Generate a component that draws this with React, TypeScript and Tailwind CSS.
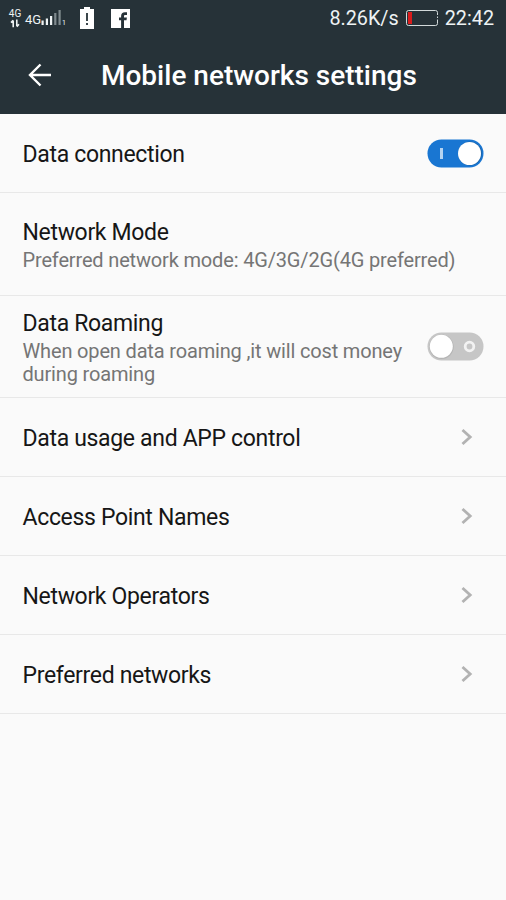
import React from 'react';

type Row = {
  title: string;
  summary?: string;
  control?: 'on' | 'off' | 'link';
  height: string;
};

const rows: Row[] = [
  { title: 'Data connection', control: 'on', height: 'h-[79px]' },
  { title: 'Network Mode', summary: 'Preferred network mode: 4G/3G/2G(4G preferred)', height: 'h-[103px]' },
  {
    title: 'Data Roaming',
    summary: 'When open data roaming ,it will cost money during roaming',
    control: 'off',
    height: 'h-[102px]',
  },
  { title: 'Data usage and APP control', control: 'link', height: 'h-[79px]' },
  { title: 'Access Point Names', control: 'link', height: 'h-[79px]' },
  { title: 'Network Operators', control: 'link', height: 'h-[79px]' },
  { title: 'Preferred networks', control: 'link', height: 'h-[79px]' },
];

const StatusBar: React.FC = () => (
  <div className="flex h-9 items-center pl-2 pr-3 text-[#eef3f4]">
    <div className="flex w-[14px] flex-col items-center">
      <span className="text-[10px] leading-[10px]">4G</span>
      <svg width="10" height="9" viewBox="0 0 10 9" fill="none" stroke="currentColor" strokeWidth="1.6">
        <path d="M3.2 8.2V1.5M1 3.6L3.2 1.2M6.8 0.5v6.7M9 5.2L6.8 7.6" />
      </svg>
    </div>
    <span className="ml-[3px] mt-[3px] w-4 text-[13px] leading-4">4G</span>
    <svg width="25" height="18" viewBox="0 0 25 18">
      <g fill="#eef3f4">
        <rect x="0.5" y="11.5" width="2.2" height="4.5" />
        <rect x="4.8" y="9.5" width="2.2" height="6.5" />
        <rect x="9" y="7" width="2.2" height="9" />
      </g>
      <g fill="#7f8a8e">
        <rect x="13.2" y="4" width="2.2" height="12" />
        <rect x="17.5" y="1" width="2.2" height="15" />
      </g>
      <text x="21" y="16" fontSize="7" fill="#eef3f4">1</text>
    </svg>
    <svg className="ml-[14px]" width="14" height="22" viewBox="0 0 14 22">
      <path d="M4 0h6v2h4v20H0V2h4z" fill="#fff" />
      <path d="M6.1 6h1.8v8H6.1zM6.1 16h1.8v2H6.1z" fill="#263238" />
    </svg>
    <svg className="ml-[17px]" width="19" height="19" viewBox="0 0 19 19">
      <rect width="19" height="19" fill="#fff" />
      <path d="M16 3.2h-2c-2.6 0-3.9 1.4-3.9 3.7v1.6H8v2.7h2.1V19h2.9v-7.8h2.5l.4-2.7H13V7.2c0-.9.4-1.3 1.3-1.3H16z" fill="#263238" />
    </svg>
    <span className="ml-auto pt-0.5 text-[19.8px] leading-6">8.26K/s</span>
    <svg className="ml-[7px]" width="32" height="16" viewBox="0 0 32 16">
      <rect x="0.5" y="0.5" width="31" height="15" rx="2" fill="none" stroke="#d3dadb" />
      <rect x="2" y="2" width="4" height="12" fill="#d91c1c" />
      <path d="M31.5 5v6" stroke="#263238" strokeDasharray="1.5 1.5" />
    </svg>
    <span className="ml-[7px] pt-0.5 text-[19.8px] leading-6">22:42</span>
  </div>
);

const Switch: React.FC<{ on: boolean }> = ({ on }) => (
  <svg className="ml-auto mr-[22px] shrink-0" width="57" height="29" viewBox="0 0 57 29">
    <rect x="0.5" y="0.5" width="56" height="28" rx="14" fill={on ? '#1976d2' : '#c6c6c6'} />
    {on ? (
      <>
        <rect x="13" y="9" width="3" height="11" fill="#b4d3f1" />
        <circle cx="43" cy="14.5" r="12" fill="#1c65ac" />
        <circle cx="42.5" cy="14.5" r="11.5" fill="#fff" />
      </>
    ) : (
      <>
        <circle cx="14.5" cy="14.8" r="12.2" fill="#b4b4b4" />
        <circle cx="14.3" cy="14.3" r="11.5" fill="#fff" />
        <circle cx="42.5" cy="14.5" r="4.3" fill="none" stroke="#f2f2f2" strokeWidth="2.8" />
      </>
    )}
  </svg>
);

const Chevron: React.FC = () => (
  <svg className="ml-auto mr-[33px] shrink-0" width="12" height="18" viewBox="0 0 12 18">
    <path d="M1.5 2L9.2 9L1.5 16" fill="none" stroke="#b2b2b2" strokeWidth="2.8" />
  </svg>
);

const SettingRow: React.FC<{ row: Row }> = ({ row }) => (
  <div className={`flex items-center border-b border-[#e8e8e8] pl-[22.5px] ${row.height}`}>
    <div className={row.summary ? 'w-[450px] shrink pt-0.5' : 'pt-[3px]'}>
      <h2 className="whitespace-nowrap text-[23px] leading-[30px] tracking-[-0.33px] text-[#161616]">{row.title}</h2>
      {row.summary && (
        <p className="pt-px text-[20px] leading-[23px] tracking-[-0.16px] text-[#757575]">{row.summary}</p>
      )}
    </div>
    {row.control === 'link' && <Chevron />}
    {(row.control === 'on' || row.control === 'off') && <Switch on={row.control === 'on'} />}
  </div>
);

const App: React.FC = () => (
  <div className="h-[900px] w-[506px] overflow-hidden bg-[#fafafa] font-['Roboto',sans-serif]">
    <header className="h-[114px] bg-[#263238]">
      <StatusBar />
      <div className="flex h-[78px] items-center pl-7">
        <svg width="24" height="24" viewBox="0 0 24 24" fill="none" stroke="#fff" strokeWidth="2.4">
          <path d="M23 12H2M12.5 1.5L2 12l10.5 10.5" />
        </svg>
        <h1 className="ml-[49px] pt-0.5 text-[28px] font-medium leading-8 text-white">Mobile networks settings</h1>
      </div>
    </header>
    <main>
      {rows.map((row) => (
        <SettingRow key={row.title} row={row} />
      ))}
    </main>
  </div>
);

export default App;
